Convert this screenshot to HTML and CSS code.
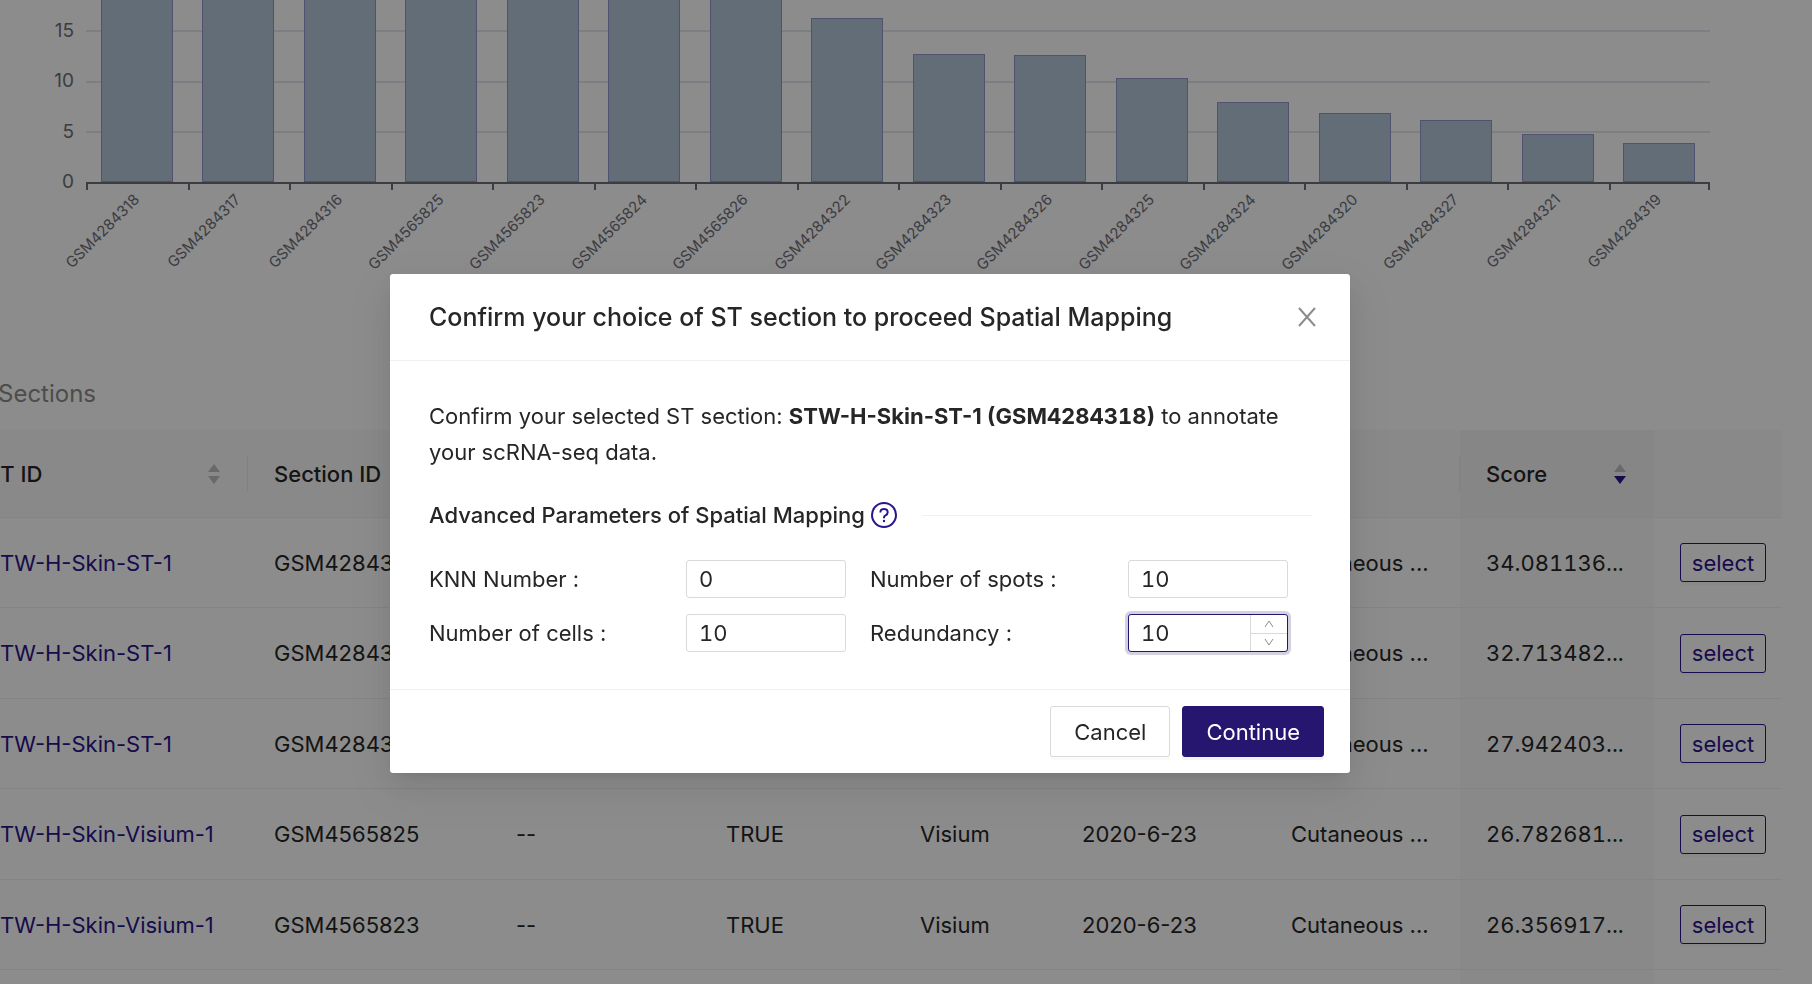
FILE: index.html
```html
<!DOCTYPE html>
<html lang="en">
<head>
<meta charset="utf-8">
<title>Spatial Mapping</title>
<link rel="stylesheet" href="styles.css">
</head>
<body>
<main class="page">
  <section class="chart">
    <div class="y-axis"><span>15</span><span>10</span><span>5</span><span>0</span></div>
    <div class="plot">
      <div class="grid-lines"><i></i><i></i><i></i><i class="base"></i></div>
      <div class="bars">
        <div class="bar" style="height:200px"></div>
        <div class="bar" style="height:200px"></div>
        <div class="bar" style="height:200px"></div>
        <div class="bar" style="height:200px"></div>
        <div class="bar" style="height:200px"></div>
        <div class="bar" style="height:200px"></div>
        <div class="bar" style="height:200px"></div>
        <div class="bar" style="height:164px"></div>
        <div class="bar" style="height:128px"></div>
        <div class="bar" style="height:127px"></div>
        <div class="bar" style="height:104px"></div>
        <div class="bar" style="height:80px"></div>
        <div class="bar" style="height:69px"></div>
        <div class="bar" style="height:62px"></div>
        <div class="bar" style="height:48px"></div>
        <div class="bar" style="height:39px"></div>
      </div>
      <div class="x-axis">
        <div class="tick"><span>GSM4284318</span></div>
        <div class="tick"><span>GSM4284317</span></div>
        <div class="tick"><span>GSM4284316</span></div>
        <div class="tick"><span>GSM4565825</span></div>
        <div class="tick"><span>GSM4565823</span></div>
        <div class="tick"><span>GSM4565824</span></div>
        <div class="tick"><span>GSM4565826</span></div>
        <div class="tick"><span>GSM4284322</span></div>
        <div class="tick"><span>GSM4284323</span></div>
        <div class="tick"><span>GSM4284326</span></div>
        <div class="tick"><span>GSM4284325</span></div>
        <div class="tick"><span>GSM4284324</span></div>
        <div class="tick"><span>GSM4284320</span></div>
        <div class="tick"><span>GSM4284327</span></div>
        <div class="tick"><span>GSM4284321</span></div>
        <div class="tick"><span>GSM4284319</span></div>
      </div>
    </div>
  </section>

  <h2 class="section-title">Sections</h2>

  <table class="results">
    <colgroup>
      <col class="c-id"><col class="c-section"><col class="c-note"><col class="c-flag"><col class="c-tech"><col class="c-date"><col class="c-tissue"><col class="c-score"><col class="c-action">
    </colgroup>
    <thead>
      <tr>
        <th class="split"><div class="head"><span>ST ID</span><svg class="sorter" viewBox="0 0 12 20"><path d="M6 0l6 8H0z"/><path d="M0 12h12l-6 8z"/></svg></div></th>
        <th>Section ID</th>
        <th></th><th></th><th></th><th></th>
        <th class="split"></th>
        <th class="score"><div class="head"><span>Score</span><svg class="sorter" viewBox="0 0 12 20"><path d="M6 0l6 8H0z"/><path class="on" d="M0 12h12l-6 8z"/></svg></div></th>
        <th></th>
      </tr>
    </thead>
    <tbody>
      <tr><td><a href="#">STW-H-Skin-ST-1</a></td><td>GSM4284318</td><td></td><td></td><td></td><td></td><td>Cutaneous ...</td><td class="score">34.081136...</td><td><button type="button" class="select">select</button></td></tr>
      <tr><td><a href="#">STW-H-Skin-ST-1</a></td><td>GSM4284317</td><td></td><td></td><td></td><td></td><td>Cutaneous ...</td><td class="score">32.713482...</td><td><button type="button" class="select">select</button></td></tr>
      <tr><td><a href="#">STW-H-Skin-ST-1</a></td><td>GSM4284316</td><td></td><td></td><td></td><td></td><td>Cutaneous ...</td><td class="score">27.942403...</td><td><button type="button" class="select">select</button></td></tr>
      <tr><td><a href="#">STW-H-Skin-Visium-1</a></td><td>GSM4565825</td><td>--</td><td>TRUE</td><td>Visium</td><td>2020-6-23</td><td>Cutaneous ...</td><td class="score">26.782681...</td><td><button type="button" class="select">select</button></td></tr>
      <tr><td><a href="#">STW-H-Skin-Visium-1</a></td><td>GSM4565823</td><td>--</td><td>TRUE</td><td>Visium</td><td>2020-6-23</td><td>Cutaneous ...</td><td class="score">26.356917...</td><td><button type="button" class="select">select</button></td></tr>
      <tr><td></td><td></td><td></td><td></td><td></td><td></td><td></td><td class="score"></td><td></td></tr>
    </tbody>
  </table>
</main>

<div class="overlay">
  <form class="modal" role="dialog" aria-labelledby="dialog-title">
    <header class="modal-header">
      <h1 id="dialog-title">Confirm your choice of ST section to proceed Spatial Mapping</h1>
      <button type="button" class="close" aria-label="Close"><svg viewBox="0 0 18 20"><path d="M1 1l16 18M17 1L1 19"/></svg></button>
    </header>
    <div class="modal-body">
      <p class="message">Confirm your selected ST section: <strong>STW-H-Skin-ST-1 <span class="digits">(GSM4284318)</span></strong> to annotate your scRNA-seq data.</p>
      <div class="divider">
        <h2>Advanced Parameters of Spatial Mapping</h2>
        <svg class="help" viewBox="0 0 26 26"><circle cx="13" cy="13" r="12"/><path d="M9.400 10.400C9.400 8.200 11 7 13 7s3.700 1.300 3.700 3.300c0 1.700-1 2.500-2.200 3.100-1.100.6-1.500 1.100-1.500 2.200v.7"/><circle class="dot" cx="13" cy="19" r="1.200"/></svg>
        <span class="rule"></span>
      </div>
      <div class="fields">
        <label for="knn">KNN Number :</label>
        <input id="knn" class="number" type="text" inputmode="numeric" value="0">
        <label for="spots">Number of spots :</label>
        <input id="spots" class="number" type="text" inputmode="numeric" value="10">
        <label for="cells">Number of cells :</label>
        <input id="cells" class="number" type="text" inputmode="numeric" value="10">
        <label for="redundancy">Redundancy :</label>
        <div class="number stepper">
          <input id="redundancy" type="text" inputmode="numeric" value="10">
          <div class="steps">
            <button type="button" aria-label="Increase"><svg viewBox="0 0 10 8"><path d="M1 7l4-6 4 6"/></svg></button>
            <button type="button" aria-label="Decrease"><svg viewBox="0 0 10 8"><path d="M1 1l4 6 4-6"/></svg></button>
          </div>
        </div>
      </div>
    </div>
    <footer class="modal-footer">
      <button type="button" class="btn">Cancel</button>
      <button type="submit" class="btn primary">Continue</button>
    </footer>
  </form>
</div>
</body>
</html>
```
FILE: styles.css
```css
* { box-sizing: border-box; }

html { overflow: hidden; background: #fff; }

body {
  margin: 0 0 0 -72px;
  height: 100vh;
  overflow: hidden;
  font-family: Inter, "Liberation Sans", sans-serif;
  font-size: 22px;
  color: #262626;
}

h1, h2, p { margin: 0; }
button, input { font: inherit; color: inherit; }

.digits, .number, td.score { font-variant-numeric: tabular-nums; }

.page { height: 100vh; padding: 0 30px 0 32px; overflow: hidden; }

/* Chart */
.chart {
  display: grid;
  grid-template-columns: 114px 1fr;
  column-gap: 12px;
  padding-right: 72px;
  color: #6e7079;
}

.y-axis {
  display: flex;
  flex-direction: column;
  justify-content: space-between;
  align-items: flex-end;
  height: 192px;
  padding-top: 21px;
  font-size: 19px;
  line-height: 20px;
}

.plot { position: relative; }

.grid-lines {
  position: absolute;
  inset: 30px 0 auto 0;
  height: 154px;
  display: flex;
  flex-direction: column;
  justify-content: space-between;
}
.grid-lines i { height: 2px; background: #e3e5f0; }
.grid-lines .base { background: #6e7079; }

.bars {
  position: relative;
  display: grid;
  grid-template-columns: repeat(16, 1fr);
  grid-template-rows: 100%;
  align-items: end;
  justify-items: center;
  height: 182px;
  overflow: hidden;
}
.bar {
  width: 72px;
  background: #b5c7db;
  border: 1px solid #9295cc;
}

.x-axis {
  display: grid;
  grid-template-columns: repeat(16, 1fr);
  height: 90px;
}
.tick {
  position: relative;
  background: linear-gradient(#6e7079, #6e7079) 0 0 / 2px 8px no-repeat;
}
.tick:last-child {
  background: linear-gradient(#6e7079, #6e7079) 0 0 / 2px 8px no-repeat,
    linear-gradient(#6e7079, #6e7079) 100% 0 / 2px 8px no-repeat;
}
.tick span {
  position: absolute;
  top: 5px;
  right: 50%;
  font-size: 15px;
  line-height: 20px;
  transform: rotate(-45deg);
  transform-origin: right center;
}

.section-title {
  margin: 106px 0 20px;
  padding-left: 38px;
  font-size: 24px;
  line-height: 32px;
  font-weight: 400;
  color: #8c8c8c;
}

/* Results table */
.results {
  width: 100%;
  table-layout: fixed;
  border-collapse: separate;
  border-spacing: 0;
}
.c-id { width: 288px; }
.c-section { width: 242px; }
.c-note { width: 210px; }
.c-flag { width: 194px; }
.c-tech { width: 162px; }
.c-date { width: 209px; }
.c-tissue { width: 195px; }
.c-score { width: 194px; }
.c-action { width: 128px; }

.results th,
.results td {
  padding: 0 26px;
  text-align: left;
  white-space: nowrap;
  border-bottom: 1px solid #f0f0f0;
}
.results th {
  height: 88px;
  font-weight: 500;
  background: #fafafa;
}
.results td { height: 90px; }
.results tr:nth-child(even) td { height: 91px; }
.results td.score { background: #fafafa; }
.results th.score { background: #f5f5f5; }
.results th.split {
  background: linear-gradient(#ececec, #ececec) 100% 50% / 1px 36px no-repeat #fafafa;
}
.results a { color: #2a158c; text-decoration: none; }

.head { display: flex; align-items: center; justify-content: space-between; padding-right: 2px; }
.sorter { width: 12px; height: 20px; fill: #bfbfbf; }
.sorter .on { fill: #2a158c; }

.select {
  display: block;
  width: 86px;
  height: 39px;
  padding: 0;
  border: 1px solid #2a158c;
  border-radius: 3px;
  background: #fff;
  color: #2a158c;
  box-shadow: 0 3px 0 rgba(0, 0, 0, 0.02);
}

/* Dialog */
.overlay {
  position: fixed;
  inset: 0 0 0 -72px;
  display: flex;
  justify-content: center;
  align-items: flex-start;
  padding-top: 274px;
  background: rgba(0, 0, 0, 0.45);
}
.modal {
  width: 960px;
  background: #fff;
  border-radius: 3px;
  box-shadow: 0 5px 11px -7px rgba(0, 0, 0, 0.12), 0 11px 29px rgba(0, 0, 0, 0.08), 0 16px 50px 14px rgba(0, 0, 0, 0.05);
}

.modal-header {
  display: flex;
  align-items: center;
  justify-content: space-between;
  height: 87px;
  padding: 0 34px 0 39px;
  border-bottom: 1px solid #f0f0f0;
}
.modal-header h1 { font-size: 25px; line-height: 36px; font-weight: 500; }
.close { display: flex; padding: 0; border: 0; background: none; }
.close svg { width: 18px; height: 20px; fill: none; stroke: #8c8c8c; stroke-width: 2; }

.modal-body { padding: 37px 38px 37px 39px; }
.message { line-height: 36px; }

.divider { display: flex; align-items: center; margin-top: 27px; height: 36px; }
.divider h2 { font-size: 22px; line-height: 36px; font-weight: 500; }
.help { width: 26px; height: 26px; margin-left: 6px; fill: none; stroke: #2a158c; stroke-width: 2; }
.help .dot { fill: #2a158c; stroke: none; }
.rule { flex: 1; height: 1px; margin-left: 25px; background: #f0f0f0; }

.fields {
  display: grid;
  grid-template-columns: 257px 160px 282px 160px;
  row-gap: 16px;
  align-items: center;
  margin-top: 27px;
}
.fields label:nth-of-type(even) { padding-left: 24px; }

.number {
  width: 160px;
  height: 38px;
  padding: 0 12px;
  border: 1px solid #d9d9d9;
  border-radius: 3px;
  background: #fff;
}
.stepper {
  display: flex;
  padding: 0;
  border-color: #26166f;
  box-shadow: 0 0 0 3px rgba(38, 22, 111, 0.2);
}
.stepper input {
  flex: 1;
  min-width: 0;
  padding: 0 12px;
  border: 0;
  background: none;
  outline: none;
}
.steps { display: flex; flex-direction: column; width: 37px; border-left: 1px solid #d9d9d9; }
.steps button {
  flex: 1;
  display: flex;
  align-items: center;
  justify-content: center;
  padding: 0;
  border: 0;
  background: none;
}
.steps button + button { border-top: 1px solid #d9d9d9; }
.steps svg { width: 10px; height: 8px; fill: none; stroke: #8c8c8c; }

.modal-footer {
  display: flex;
  justify-content: flex-end;
  gap: 12px;
  padding: 16px 26px;
  border-top: 1px solid #f0f0f0;
}
.btn {
  height: 51px;
  padding: 0 23px;
  border: 1px solid #d9d9d9;
  border-radius: 3px;
  background: #fff;
  box-shadow: 0 3px 0 rgba(0, 0, 0, 0.02);
}
.btn.primary {
  border-color: #26166f;
  background: #26166f;
  color: #fff;
  box-shadow: 0 3px 0 rgba(0, 0, 0, 0.05);
}
```
